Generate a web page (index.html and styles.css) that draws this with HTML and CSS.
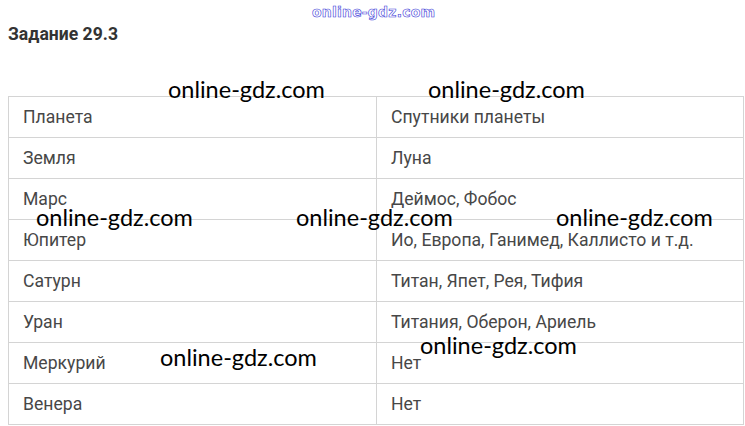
FILE: index.html
```html
<!DOCTYPE html>
<html lang="ru">
<head>
    <meta charset="UTF-8">
    <meta name="viewport" content="width=device-width, initial-scale=1.0">
    <title>Задание 29.3</title>
    <link rel="stylesheet" href="styles.css">
</head>
<body>
    <div class="page">
        <div class="site-mark">online-gdz.com</div>
        <h2 class="task-title">Задание 29.3</h2>
        <table class="answer">
            <tr><td>Планета</td><td>Спутники планеты</td></tr>
            <tr><td>Земля</td><td>Луна</td></tr>
            <tr><td>Марс</td><td>Деймос, Фобос</td></tr>
            <tr><td>Юпитер</td><td>Ио, Европа, Ганимед, Каллисто и т.д.</td></tr>
            <tr><td>Сатурн</td><td>Титан, Япет, Рея, Тифия</td></tr>
            <tr><td>Уран</td><td>Титания, Оберон, Ариель</td></tr>
            <tr><td>Меркурий</td><td>Нет</td></tr>
            <tr><td>Венера</td><td>Нет</td></tr>
        </table>

        <!-- watermarks over the picture -->
        <span class="wm wm1">online-gdz.com</span>
        <span class="wm wm2">online-gdz.com</span>
        <span class="wm wm3">online-gdz.com</span>
        <span class="wm wm4">online-gdz.com</span>
        <span class="wm wm5">online-gdz.com</span>
        <span class="wm wm6">online-gdz.com</span>
        <span class="wm wm7">online-gdz.com</span>
    </div>
</body>
</html>
```
FILE: styles.css
```css
* { margin: 0; padding: 0; box-sizing: border-box; }
body { background: #fff; font-family: Roboto, 'Liberation Sans', sans-serif; color: #444; }
.page { position: relative; width: 745px; height: 426px; padding: 0 1px 0 8px; overflow: hidden; }
.site-mark { height: 24px; padding-left: 304px; font-family: 'DejaVu Sans', sans-serif; font-size: 14px; font-weight: 700; line-height: 24px; color: #fff; -webkit-text-stroke: 0.6px #3a3ad8; letter-spacing: 0.2px; }
.task-title { font-size: 17.6px; font-weight: 700; color: #333; line-height: 20px; height: 72px; }
.answer { width: 100%; border-collapse: collapse; }
.answer td { border: 1px solid #d4d4d4; height: 41px; padding: 0 14px; font-size: 17.6px; color: #474747; vertical-align: middle; }
.answer td:first-child { width: 368px; }
.wm { position: absolute; font-family: Lato, 'Open Sans', sans-serif; font-size: 23.5px; color: #000; line-height: 1; white-space: nowrap; }
.wm1 { left: 168px; top: 78px; }
.wm2 { left: 428px; top: 78px; }
.wm3 { left: 36px; top: 206px; }
.wm4 { left: 296px; top: 206px; }
.wm5 { left: 556px; top: 206px; }
.wm6 { left: 160px; top: 346px; }
.wm7 { left: 420px; top: 334px; }
```
